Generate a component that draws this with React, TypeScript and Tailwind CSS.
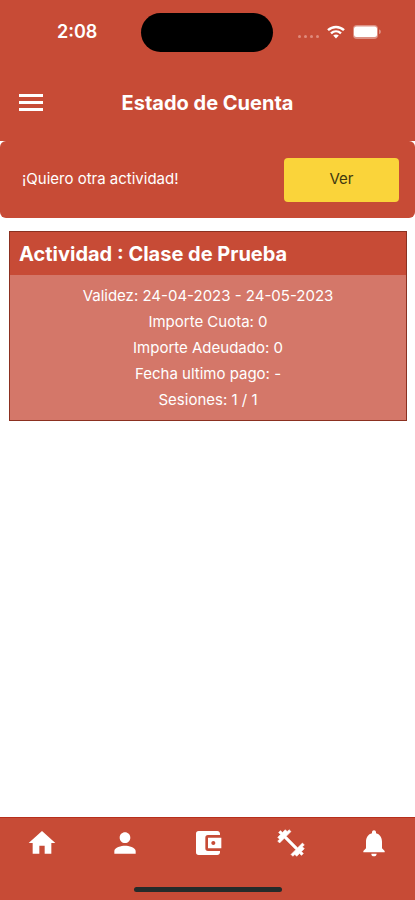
import React from "react";
import {
  MdAccountBalanceWallet,
  MdHome,
  MdNotifications,
  MdPerson,
} from "react-icons/md";

const details = [
  "Validez: 24-04-2023 - 24-05-2023",
  "Importe Cuota: 0",
  "Importe Adeudado: 0",
  "Fecha ultimo pago: -",
  "Sesiones: 1 / 1",
];

function DumbbellIcon({ className }: { className?: string }) {
  return (
    <svg viewBox="0 0 24 24" className={className} fill="currentColor" stroke="currentColor" strokeWidth=".4" aria-hidden="true">
      <path d="M20.570 14.860 22 13.430 20.570 12 17 15.570 8.430 7 12 3.430 10.570 2 9.140 3.430 7.710 2 5.570 4.140 4.140 2.710 2.710 4.140 4.140 5.570 2 7.710 3.430 9.140 2 10.570 3.430 12 7 8.430 15.570 17 12 20.570 13.430 22 14.860 20.570 16.290 22 18.430 19.860 19.860 21.290 21.290 19.860 19.860 18.430 22 16.290z" />
    </svg>
  );
}

const tabs = [
  { label: "Inicio", Icon: MdHome },
  { label: "Perfil", Icon: MdPerson },
  { label: "Estado de cuenta", Icon: MdAccountBalanceWallet },
  { label: "Entrenamiento", Icon: DumbbellIcon },
  { label: "Notificaciones", Icon: MdNotifications },
];

function MenuIcon() {
  return (
    <svg viewBox="0 0 24 17" className="h-[17px] w-6" fill="currentColor" aria-hidden="true">
      <path d="M0 0h24v3H0zM0 7h24v3H0zM0 14h24v3H0z" />
    </svg>
  );
}

function WifiIcon() {
  return (
    <svg viewBox="0 0 18 14" className="h-[14px] w-[18px]" fill="none" stroke="currentColor" strokeWidth="2.4" aria-hidden="true">
      <path d="M1 5.200C5.500.9 12.500.9 17 5.200" />
      <path d="M4 8.400c2.900-2.700 7.100-2.700 10 0" />
      <path d="M6.200 10.600c1.600-1.500 4-1.500 5.600 0L9 13.500z" fill="currentColor" stroke="none" />
    </svg>
  );
}

function BatteryIcon() {
  return (
    <svg viewBox="0 0 28 14" className="h-[14px] w-7" aria-hidden="true">
      <rect width="25" height="14" rx="4" fill="#dd9184" />
      <rect x="1" y="1.500" width="23" height="10.500" rx="2.500" fill="#fff" />
      <path d="M26 4.500c2.500.5 2.500 4 0 4.500z" fill="#dd9184" />
    </svg>
  );
}

export default function App() {
  return (
    <div className="flex min-h-screen flex-col bg-white font-['Inter','Liberation_Sans',sans-serif] text-white">
      <header className="bg-[#c74b36]">
        <div className="grid h-16 grid-cols-3 items-center">
          <span className="pl-4 text-center text-lg font-semibold">2:08</span>
          <span className="h-[39px] w-[132px] justify-self-center rounded-full bg-black" />
          <div className="flex items-center justify-end gap-2 pr-[34px]">
            <span className="flex gap-[3px] pt-2">
              {[0, 1, 2, 3].map((dot) => (
                <i key={dot} className="size-[3px] rounded-full bg-[#df8a7c]" />
              ))}
            </span>
            <WifiIcon />
            <BatteryIcon />
          </div>
        </div>
        <div className="grid h-[77px] grid-cols-[62px_1fr_62px] items-center">
          <button type="button" aria-label="Menú" className="justify-self-center p-1">
            <MenuIcon />
          </button>
          <h1 className="text-center text-xl font-bold">Estado de Cuenta</h1>
        </div>
      </header>

      <main className="flex-1">
        <section className="flex h-[77px] items-center justify-between rounded-md bg-[#c74b36] pr-4 pl-[22px]">
          <p className="text-[15px]">¡Quiero otra actividad!</p>
          <button type="button" className="h-11 w-[115px] rounded bg-[#fad43a] text-[15px] text-[#40380f]">
            Ver
          </button>
        </section>
        <section className="mt-[13px] mr-2 ml-[9px] border border-[#8b3020] bg-[#d47769]">
          <h2 className="flex h-[43px] items-center bg-[#c74b36] px-[9px] text-xl font-bold">
            Actividad : Clase de Prueba
          </h2>
          <ul className="pt-2 pb-[7px] text-center text-[15px]">
            {details.map((line) => (
              <li key={line} className="leading-[26px]">{line}</li>
            ))}
          </ul>
        </section>
      </main>

      <footer className="border-t border-[#b72f1c] bg-[#c74b36]">
        <nav className="grid h-[50px] grid-cols-5">
          {tabs.map(({ label, Icon }) => (
            <button key={label} type="button" aria-label={label} className="grid place-items-center">
              <Icon className="size-8" />
            </button>
          ))}
        </nav>
        <div className="flex h-8 items-center justify-center pt-2.5">
          <span className="h-[5px] w-[148px] rounded-full bg-[#242b2a]" />
        </div>
      </footer>
    </div>
  );
}
